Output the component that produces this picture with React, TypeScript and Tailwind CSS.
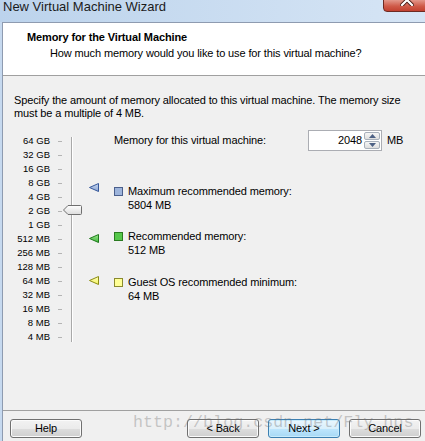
import React from "react";

const labels = [
  "64 GB", "32 GB", "16 GB", "8 GB", "4 GB", "2 GB", "1 GB",
  "512 MB", "256 MB", "128 MB", "64 MB", "32 MB", "16 MB", "8 MB", "4 MB",
];

function Tri({ y, fill1, fill2, stroke, id }: { y: number; fill1: string; fill2: string; stroke: string; id: string }) {
  return (
    <g>
      <defs>
        <linearGradient id={id} x1="0" y1="0" x2="0" y2="1">
          <stop offset="0" stopColor={fill1} />
          <stop offset="1" stopColor={fill2} />
        </linearGradient>
      </defs>
      <path d={`M27.5 ${y + 4.5} L36.5 ${y + 0.5} L36.5 ${y + 8.5} Z`} fill={`url(#${id})`} stroke={stroke} strokeWidth="1" strokeLinejoin="round" />
    </g>
  );
}

function Item({ color, border, line1, line2, className }: { color: string; border: string; line1: string; line2: string; className: string }) {
  return (
    <div className={`flex ${className}`}>
      <div className="mt-[3px] h-[9px] w-[9px] shrink-0 border" style={{ background: color, borderColor: border }} />
      <div className="ml-[5px] text-[11px] leading-[14px]">
        <div>{line1}</div>
        <div>{line2}</div>
      </div>
    </div>
  );
}

function Btn({ children, primary }: { children: React.ReactNode; primary?: boolean }) {
  return (
    <div
      className={
        "flex h-[19px] w-[72px] items-center justify-center rounded-[3px] border text-[11px] leading-none " +
        (primary
          ? "border-[#3c7fb1] bg-[linear-gradient(to_bottom,#eaf6fd_0%,#d9f0fc_50%,#bee6fd_51%,#a7d9f5_100%)] shadow-[inset_0_0_0_1px_#c9ecfc]"
          : "border-[#707070] bg-[linear-gradient(to_bottom,#f2f2f2_0%,#ebebeb_50%,#dddddd_51%,#cfcfcf_100%)] shadow-[inset_0_0_0_1px_#fbfbfb]")
      }
    >
      {children}
    </div>
  );
}

export default function App() {
  return (
    <div className="relative h-[441px] w-[425px] overflow-hidden bg-[linear-gradient(to_right,#bcd3ec,#d6e5f5)] font-['Liberation_Sans',Arial,sans-serif] tracking-[-0.12px] text-black">
      {/* Title bar */}
      <div className="relative h-[22px]">
        <div className="pl-[3px] text-[13px] leading-[13px] tracking-normal text-[#1b1b1b]">New Virtual Machine Wizard</div>
        <div className="absolute left-[383px] top-[-2px] h-[14px] w-[50px] overflow-hidden rounded-bl-[4px] border border-[#6e2a22] bg-[linear-gradient(to_bottom,#e6a195,#cf5a48_60%,#c24130)]">
          <svg className="absolute left-[16px] top-[-4px]" width="14" height="11" viewBox="0 0 14 11">
            <path d="M2 0 L12 10 M12 0 L2 10" stroke="#4a1a14" strokeWidth="4" strokeLinecap="square" />
            <path d="M2 0 L12 10 M12 0 L2 10" stroke="#ffffff" strokeWidth="2.2" strokeLinecap="square" />
          </svg>
        </div>
      </div>

      {/* Body */}
      <div className="flex h-[419px]">
        <div className="w-[2px] bg-[#c6d9ef]" />
        <div className="flex flex-1 flex-col border-l border-t border-[#8e9bb0] bg-[#f0f0f0]">
          {/* Header */}
          <div className="h-[53px] border-b border-[#a0a0a0] bg-white pt-[6px]">
            <div className="pl-[24px] text-[11px] font-bold leading-[16px]">Memory for the Virtual Machine</div>
            <div className="pl-[47px] text-[11px] leading-[16px]">How much memory would you like to use for this virtual machine?</div>
          </div>

          {/* Content */}
          <div className="pl-[11px] pt-[18px] text-[11px] leading-[13px]">
            Specify the amount of memory allocated to this virtual machine. The memory size
            <br />
            must be a multiple of 4 MB.
          </div>

          <div className="mt-[10px] flex">
            {/* slider labels */}
            <div className="flex w-[111px]">
              <div className="w-[47px] pt-[4px]">
                {labels.map((l) => (
                  <div key={l} className="h-[14px] text-right text-[9.5px] leading-[14px] tracking-normal">
                    {l}
                  </div>
                ))}
              </div>
              <div className="ml-[8px] w-[4px] pt-[4px]">
                {labels.map((l) => (
                  <div key={l} className="flex h-[14px] items-center">
                    <div className="h-px w-[4px] bg-[#b4b4b4]" />
                  </div>
                ))}
              </div>
              <svg width="52" height="215" viewBox="0 0 52 215" className="shrink-0">
                <defs>
                  <linearGradient id="thumb" x1="0" y1="0" x2="0" y2="1">
                    <stop offset="0" stopColor="#ffffff" />
                    <stop offset="1" stopColor="#dcdcdc" />
                  </linearGradient>
                </defs>
                <rect x="9" y="7" width="1" height="205" fill="#a9a9a9" />
                <rect x="10" y="7" width="1" height="205" fill="#ffffff" />
                <path d="M1.5 80 L6 75.5 L18.5 75.5 Q19.5 75.5 19.5 76.5 L19.5 83.5 Q19.5 84.5 18.5 84.5 L6 84.5 Z" fill="url(#thumb)" stroke="#6f6f6f" strokeWidth="1" />
                <Tri y={53} fill1="#c6d6f0" fill2="#8aa4d2" stroke="#35579a" id="tb" />
                <Tri y={104} fill1="#9be58f" fill2="#3fb83a" stroke="#1f7a1c" id="tg" />
                <Tri y={146} fill1="#ffffc0" fill2="#f3f35a" stroke="#8c8c14" id="ty" />
              </svg>
            </div>

            {/* right column */}
            <div className="flex-1">
              <div className="flex h-[21px] items-center text-[11px]">
                <div className="w-[194px]">Memory for this virtual machine:</div>
                <div className="flex h-[21px] w-[74px] border border-[#abadb3] bg-white">
                  <div className="flex flex-1 items-center justify-end pr-[2px]">2048</div>
                  <div className="flex w-[17px] flex-col gap-px py-px pr-px">
                    <div className="flex flex-1 items-center justify-center rounded-[2px] border border-[#a8b0bb] bg-[linear-gradient(to_bottom,#f6f6f6,#dedede)]">
                      <svg width="7" height="4" viewBox="0 0 7 4"><path d="M0 4 L3.5 0 L7 4 Z" fill="#4d6185" /></svg>
                    </div>
                    <div className="flex flex-1 items-center justify-center rounded-[2px] border border-[#a8b0bb] bg-[linear-gradient(to_bottom,#f6f6f6,#dedede)]">
                      <svg width="7" height="4" viewBox="0 0 7 4"><path d="M0 0 L7 0 L3.5 4 Z" fill="#4d6185" /></svg>
                    </div>
                  </div>
                </div>
                <div className="ml-[5px]">MB</div>
              </div>

              <Item className="mt-[33px]" color="#9db4db" border="#4a5f8c" line1="Maximum recommended memory:" line2="5804 MB" />
              <Item className="mt-[17px]" color="#55c74a" border="#2a7a20" line1="Recommended memory:" line2="512 MB" />
              <Item className="mt-[18px]" color="#ffff96" border="#8a8a2e" line1="Guest OS recommended minimum:" line2="64 MB" />
            </div>
          </div>

          {/* Footer */}
          <div className="mt-auto h-[31px] border-t border-[#a0a0a0]">
            <div className="flex pl-[7px] pr-[4px] pt-[8px]">
              <Btn>Help</Btn>
              <div className="ml-auto flex gap-[9px]">
                <Btn>&lt; Back</Btn>
                <Btn primary>Next &gt;</Btn>
                <Btn>Cancel</Btn>
              </div>
            </div>
          </div>
        </div>
      </div>

      {/* watermark */}
      <div className="pointer-events-none absolute left-[133px] top-[413px] font-['Liberation_Mono',monospace] text-[16.7px] leading-[20px] tracking-normal text-[rgba(110,110,110,0.35)]">
        http://blog.csdn.net/Fly_hps
      </div>
    </div>
  );
}
